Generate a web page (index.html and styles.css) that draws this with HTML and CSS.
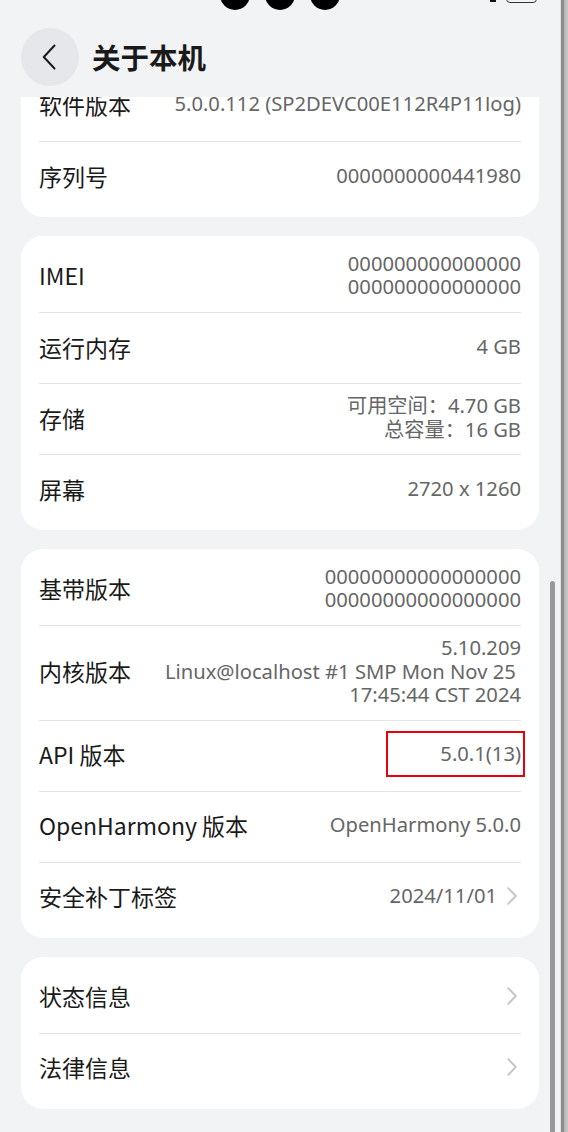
FILE: index.html
```html
<!DOCTYPE html>
<html lang="zh-CN">
<head>
<meta charset="utf-8">
<title>关于本机</title>
<link rel="stylesheet" href="styles.css">
</head>
<body>
<div class="screen">
  <div class="app">
    <div class="cutouts">
      <span class="dot"></span><span class="dot"></span><span class="dot"></span>
    </div>
    <div class="status-mark"></div>
    <div class="status-box"></div>
    <header class="header">
      <button class="back" aria-label="返回">
        <svg width="14" height="26" viewBox="0 0 14 26"><path d="M12.5 1.5 L1.8 13 L12.5 24.5" fill="none" stroke="#1a1a1a" stroke-width="2" stroke-linecap="round" stroke-linejoin="round"/></svg>
      </button>
      <h1 class="title">关于本机</h1>
    </header>
    <main class="scroll">
      <div class="content">
        <section class="card">
          <div class="row"><span class="label">软件版本</span><span class="value">5.0.0.112 (SP2DEVC00E112R4P11log)</span></div>
          <div class="row"><span class="label">序列号</span><span class="value">0000000000441980</span></div>
        </section>
        <section class="card">
          <div class="row"><span class="label">IMEI</span><span class="value">000000000000000<br>000000000000000</span></div>
          <div class="row"><span class="label">运行内存</span><span class="value">4 GB</span></div>
          <div class="row"><span class="label">存储</span><span class="value">可用空间：4.70 GB<br>总容量：16 GB</span></div>
          <div class="row"><span class="label">屏幕</span><span class="value">2720 x 1260</span></div>
        </section>
        <section class="card">
          <div class="row"><span class="label">基带版本</span><span class="value">00000000000000000<br>00000000000000000</span></div>
          <div class="row"><span class="label">内核版本</span><span class="value">5.10.209<br>Linux@localhost #1 SMP Mon Nov 25&nbsp;<br>17:45:44 CST 2024</span></div>
          <div class="row"><span class="label">API 版本</span><span class="value highlight">5.0.1(13)</span></div>
          <div class="row"><span class="label">OpenHarmony 版本</span><span class="value">OpenHarmony 5.0.0</span></div>
          <div class="row"><span class="label">安全补丁标签</span><span class="value">2024/11/01</span><span class="chev"><svg width="10" height="18" viewBox="0 0 10 18"><path d="M1.2 1.2 L8.8 9 L1.2 16.8" fill="none" stroke="#c4c4c4" stroke-width="1.8" stroke-linecap="round" stroke-linejoin="round"/></svg></span></div>
        </section>
        <section class="card">
          <div class="row"><span class="label">状态信息</span><span class="chev"><svg width="10" height="18" viewBox="0 0 10 18"><path d="M1.2 1.2 L8.8 9 L1.2 16.8" fill="none" stroke="#c4c4c4" stroke-width="1.8" stroke-linecap="round" stroke-linejoin="round"/></svg></span></div>
          <div class="row"><span class="label">法律信息</span><span class="chev"><svg width="10" height="18" viewBox="0 0 10 18"><path d="M1.2 1.2 L8.8 9 L1.2 16.8" fill="none" stroke="#c4c4c4" stroke-width="1.8" stroke-linecap="round" stroke-linejoin="round"/></svg></span></div>
        </section>
      </div>
      <div class="scrollbar"></div>
    </main>
  </div>
  <div class="edge"></div>
</div>
</body>
</html>
```

FILE: styles.css
```css
* { box-sizing: border-box; }
html, body { margin: 0; padding: 0; }
body {
  width: 568px;
  height: 1132px;
  overflow: hidden;
  background: #f1f3f5;
  font-family: "Noto Sans", "Noto Sans CJK SC", sans-serif;
  color: #1a1a1a;
}
.screen {
  display: flex;
  height: 1132px;
}
.app {
  position: relative;
  width: 560px;
  height: 1132px;
  display: flex;
  flex-direction: column;
  background: #f1f3f5;
}
.edge {
  width: 8px;
  height: 100%;
  background: linear-gradient(to right, #e2e2e2 0, #e2e2e2 1px, #8c8c8c 1px, #8c8c8c 4px, #b4b4b4 4px, #c9c9c9 8px);
}
.cutouts {
  position: absolute;
  top: -20px;
  left: 220px;
  display: flex;
  gap: 15px;
  z-index: 3;
}
.dot {
  width: 30px;
  height: 30px;
  border-radius: 50%;
  background: #000;
  filter: blur(0.6px);
}
.status-mark {
  position: absolute;
  top: 0;
  left: 490px;
  width: 6px;
  height: 2px;
  background: #111;
  z-index: 3;
}
.status-box {
  position: absolute;
  top: -10px;
  left: 506px;
  width: 31px;
  height: 13px;
  border: 1.5px solid #333;
  border-radius: 4px;
  z-index: 3;
}
.header {
  height: 97px;
  flex: none;
  display: flex;
  align-items: center;
  padding: 17px 0 0 21px;
  gap: 13px;
  background: #f1f3f5;
}
.back {
  width: 58px;
  height: 58px;
  border-radius: 50%;
  border: none;
  background: #e5e7ea;
  display: flex;
  align-items: center;
  justify-content: center;
  padding: 0 2px 0 0;
  margin: 0;
}
.title {
  margin: 0;
  font-family: "Noto Sans CJK SC", sans-serif;
  font-size: 28.5px;
  font-weight: 700;
  color: #1a1a1a;
  line-height: 40px;
}
.scroll {
  position: relative;
  flex: 1;
  overflow: hidden;
}
.content {
  margin-top: -32px;
  padding: 0 21px;
  display: flex;
  flex-direction: column;
  gap: 19px;
}
.card {
  background: #fff;
  border-radius: 22px;
  padding: 5px 18px;
}
.row {
  min-height: 71px;
  display: flex;
  align-items: center;
  gap: 12px;
  padding: 10px 0 13px;
  border-top: 1px solid #e2e3e5;
}
.row:first-child { border-top: none; }
.label {
  flex: none;
  font-family: "Noto Sans CJK SC", sans-serif;
  font-size: 23px;
  line-height: 30px;
  color: #1a1a1a;
}
.value {
  margin-left: auto;
  text-align: right;
  font-family: "Noto Sans", "Noto Sans CJK SC", sans-serif;
  font-size: 20.2px;
  line-height: 23.5px;
  color: #666;
}
.value.highlight {
  width: 139px;
  height: 46px;
  display: flex;
  align-items: center;
  justify-content: flex-end;
  padding-right: 2px;
  margin-right: -4px;
  border: 2px solid #e8000b;
}
.chev {
  margin-left: auto;
  width: 14px;
  display: flex;
  align-items: center;
  justify-content: center;
  margin-right: 2px;
}
.value + .chev { margin-left: -4px; }
.scrollbar {
  position: absolute;
  left: 550px;
  top: 484px;
  width: 5px;
  height: 600px;
  border-radius: 3px;
  background: #989898;
}
```
